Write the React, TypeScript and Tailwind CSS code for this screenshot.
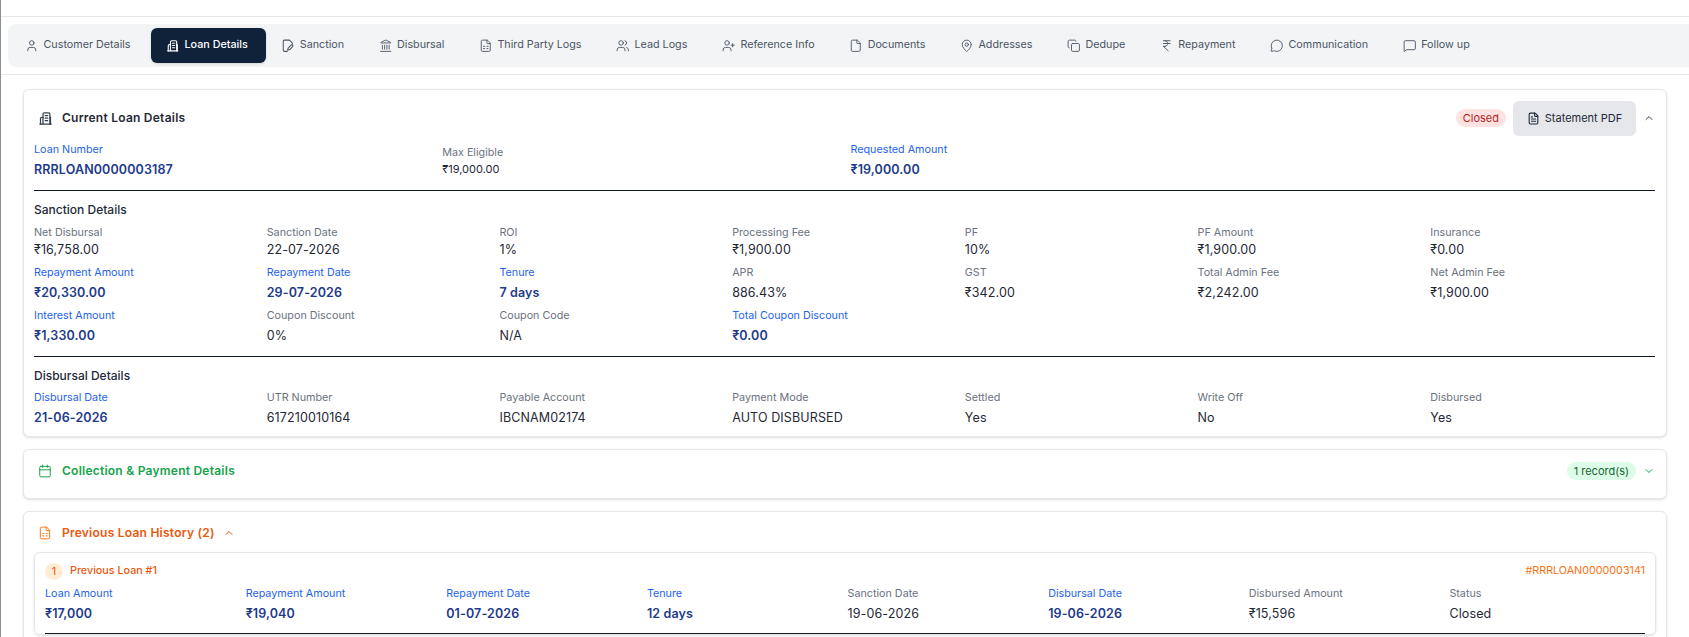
import {
  Calendar,
  ChevronDown,
  ChevronUp,
  Copy,
  File,
  FileSpreadsheet,
  FileText,
  IndianRupee,
  Landmark,
  MapPin,
  MessageCircle,
  MessageSquare,
  User,
  UserPlus,
  Users,
} from "lucide-react";

function TowerIcon({ className }: { className?: string }) {
  return (
    <svg viewBox="0 0 24 24" fill="none" stroke="currentColor" strokeWidth="2" strokeLinecap="round" strokeLinejoin="round" className={className}>
      <path d="M8 21V5a2 2 0 0 1 2-2h7a2 2 0 0 1 2 2v16" />
      <path d="M8 10H6a2 2 0 0 0-2 2v9" />
      <path d="M19 10h1v11" />
      <path d="M3 21h18" />
      <path d="M11.5 7.5h4M11.5 11.5h4M11.5 15.5h4" />
    </svg>
  );
}

function PagePenIcon({ className }: { className?: string }) {
  return (
    <svg viewBox="0 0 24 24" fill="none" stroke="currentColor" strokeWidth="1.8" strokeLinecap="round" strokeLinejoin="round" className={className}>
      <path d="M20 10V7l-5-5H6a2 2 0 0 0-2 2v16a2 2 0 0 0 2 2h5" />
      <path d="M20.6 13.6a1.9 1.9 0 0 0-2.7-2.7l-5.2 5.2-1 3.7 3.7-1z" />
    </svg>
  );
}

const tabs = [
  { name: "Customer Details", icon: User },
  { name: "Loan Details", icon: TowerIcon, active: true },
  { name: "Sanction", icon: PagePenIcon },
  { name: "Disbursal", icon: Landmark },
  { name: "Third Party Logs", icon: FileSpreadsheet },
  { name: "Lead Logs", icon: Users },
  { name: "Reference Info", icon: UserPlus },
  { name: "Documents", icon: File },
  { name: "Addresses", icon: MapPin },
  { name: "Dedupe", icon: Copy },
  { name: "Repayment", icon: IndianRupee },
  { name: "Communication", icon: MessageCircle },
  { name: "Follow up", icon: MessageSquare },
];

type FieldData = { label: string; value: string; blue?: boolean; tight?: boolean };

function Field({ label, value, blue, tight }: FieldData) {
  return (
    <div>
      <div className={`text-[10.75px] leading-[14px] ${blue ? "text-[#2563eb]" : "text-[#6b7280]"}`}>{label}</div>
      <div
        className={`${tight ? "mt-[2px]" : "mt-[5px]"} text-[12.5px] leading-[16px] tracking-[0.01em] ${
          blue ? "font-semibold text-[#1e3a8a]" : "text-[#1f2937]"
        }`}
      >
        {value}
      </div>
    </div>
  );
}

const sanction: FieldData[] = [
  { label: "Repayment Amount", value: "₹20,330.00", blue: true },
  { label: "Repayment Date", value: "29-07-2026", blue: true },
  { label: "Tenure", value: "7 days", blue: true },
  { label: "APR", value: "886.43%" },
  { label: "GST", value: "₹342.00" },
  { label: "Total Admin Fee", value: "₹2,242.00" },
  { label: "Net Admin Fee", value: "₹1,900.00" },
  { label: "Interest Amount", value: "₹1,330.00", blue: true },
  { label: "Coupon Discount", value: "0%" },
  { label: "Coupon Code", value: "N/A" },
  { label: "Total Coupon Discount", value: "₹0.00", blue: true },
];

const sanctionTop: FieldData[] = [
  { label: "Net Disbursal", value: "₹16,758.00", tight: true },
  { label: "Sanction Date", value: "22-07-2026", tight: true },
  { label: "ROI", value: "1%", tight: true },
  { label: "Processing Fee", value: "₹1,900.00", tight: true },
  { label: "PF", value: "10%", tight: true },
  { label: "PF Amount", value: "₹1,900.00", tight: true },
  { label: "Insurance", value: "₹0.00", tight: true },
];

const disbursal: FieldData[] = [
  { label: "Disbursal Date", value: "21-06-2026", blue: true },
  { label: "UTR Number", value: "617210010164" },
  { label: "Payable Account", value: "IBCNAM02174" },
  { label: "Payment Mode", value: "AUTO DISBURSED" },
  { label: "Settled", value: "Yes" },
  { label: "Write Off", value: "No" },
  { label: "Disbursed", value: "Yes" },
];

const previous: FieldData[] = [
  { label: "Loan Amount", value: "₹17,000", blue: true },
  { label: "Repayment Amount", value: "₹19,040", blue: true },
  { label: "Repayment Date", value: "01-07-2026", blue: true },
  { label: "Tenure", value: "12 days", blue: true },
  { label: "Sanction Date", value: "19-06-2026" },
  { label: "Disbursal Date", value: "19-06-2026", blue: true },
  { label: "Disbursed Amount", value: "₹15,596" },
  { label: "Status", value: "Closed" },
];

export default function App() {
  return (
    <div className="h-[637px] overflow-hidden border-l border-[#8a8f94] bg-white font-['Inter',sans-serif]">
      <div className="mt-4 border-y border-[#e5e7eb] py-[7px] pl-[7px]">
        <div className="flex h-[43px] items-center gap-[6.5px] rounded-l-lg bg-[#f3f4f6] pl-[3px]">
          {tabs.map((tab) => (
            <div
              key={tab.name}
              className={`flex h-[35px] items-center gap-[5px] rounded-md text-[10.75px] ${
                tab.active
                  ? "mr-[-5px] bg-[#0f2239] pl-[15px] pr-[18px] font-medium text-white shadow-sm"
                  : "px-[14px] text-[#4b5563]"
              }`}
            >
              <tab.icon className="h-[13.5px] w-[13.5px] shrink-0" strokeWidth={1.6} />
              {tab.name}
            </div>
          ))}
        </div>
      </div>

      <div className="flex flex-col gap-3 pl-[22px] pr-[22px] pt-[14px]">
        <section className="h-[348px] rounded-md border border-[#e5e7eb] bg-white px-[10px] shadow-sm">
          <div className="flex h-[53px] items-center pt-[3px]">
            <TowerIcon className="ml-[4px] h-[15px] w-[15px] text-[#374151]" />
            <h2 className="ml-[9px] text-[12px] font-semibold tracking-[0.02em] text-[#1f2937]">Current Loan Details</h2>
            <div className="ml-auto flex items-center">
              <span className="rounded-full bg-[#fee2e2] px-[7px] py-[2px] text-[11px] leading-[14px] text-[#b91c1c]">Closed</span>
              <button className="ml-[7px] flex h-[35px] w-[123px] items-center justify-center gap-[5px] rounded-md bg-[#e5e7eb] text-[11px] text-[#1f2937]">
                <FileText className="h-[13px] w-[13px]" />
                Statement PDF
              </button>
              <ChevronUp className="ml-[7px] mr-[1px] h-[12px] w-[12px] text-[#374151]" />
            </div>
          </div>
          <div className="mr-[1px] grid h-[48px] grid-cols-4 gap-3 border-b border-[#111827]">
            <Field label="Loan Number" value="RRRLOAN0000003187" blue />
            <div className="pt-[3px]">
              <div className="text-[10.75px] leading-[14px] text-[#6b7280]">Max Eligible</div>
              <div className="mt-[2px] text-[11px] leading-[14px] text-[#1f2937]">₹19,000.00</div>
            </div>
            <Field label="Requested Amount" value="₹19,000.00" blue />
          </div>
          <h3 className="mt-[11px] text-[12px] font-medium leading-[16px] text-[#1f2937]">Sanction Details</h3>
          <div className="mr-[1px] mt-[8px] grid grid-cols-7 gap-x-3 gap-y-[8px] border-b border-[#111827] pb-[11.5px] pr-[4px]">
            {sanctionTop.map((f) => (
              <Field key={f.label} {...f} />
            ))}
            {sanction.map((f) => (
              <Field key={f.label} {...f} />
            ))}
          </div>
          <h3 className="mt-[11px] text-[12px] font-medium leading-[16px] text-[#1f2937]">Disbursal Details</h3>
          <div className="mr-[5px] mt-[7px] grid grid-cols-7 gap-x-3">
            {disbursal.map((f) => (
              <Field key={f.label} {...f} />
            ))}
          </div>
        </section>

        <section className="h-[50px] rounded-md border border-[#e5e7eb] bg-white px-[10px] shadow-sm">
          <div className="flex h-[41px] items-center">
            <Calendar className="ml-[4px] h-[14px] w-[14px] text-[#16a34a]" strokeWidth={1.7} />
            <h2 className="ml-[10px] text-[12px] font-semibold tracking-[0.02em] text-[#16a34a]">Collection &amp; Payment Details</h2>
            <div className="ml-auto flex items-center">
              <span className="rounded-full bg-[#dcfce7] px-[7px] py-[2px] text-[11px] leading-[14px] text-[#166534]">1 record(s)</span>
              <ChevronDown className="ml-[7px] mr-[1px] h-[12px] w-[12px] text-[#16a34a]" />
            </div>
          </div>
        </section>

        <section className="h-[200px] rounded-md border border-[#e5e7eb] bg-white px-[10px] shadow-sm">
          <div className="flex h-[40px] items-center pt-[1px]">
            <FileSpreadsheet className="ml-[4px] h-[14px] w-[14px] text-[#f97316]" strokeWidth={1.7} />
            <h2 className="ml-[10px] text-[12px] font-semibold tracking-[0.02em] text-[#ea580c]">Previous Loan History (2)</h2>
            <ChevronUp className="ml-[8px] h-[12px] w-[12px] text-[#ea580c]" />
          </div>
          <div className="rounded-md border border-[#e5e7eb] px-[10px] pt-[10px] shadow-sm">
            <div className="flex items-center">
              <span className="flex h-[17px] w-[18px] items-center justify-center rounded-full bg-[#ffedd5] text-[11px] text-[#ea580c]">1</span>
              <span className="ml-[7px] text-[10.75px] font-medium text-[#ea580c]">Previous Loan #1</span>
              <span className="ml-auto text-[10.75px] text-[#f97316]">#RRRLOAN0000003141</span>
            </div>
            <div className="mt-[7px] grid grid-cols-8 gap-x-3 border-b border-[#111827] pb-[11px] pr-[7px]">
              {previous.map((f) => (
                <Field key={f.label} {...f} />
              ))}
            </div>
          </div>
        </section>
      </div>
    </div>
  );
}
